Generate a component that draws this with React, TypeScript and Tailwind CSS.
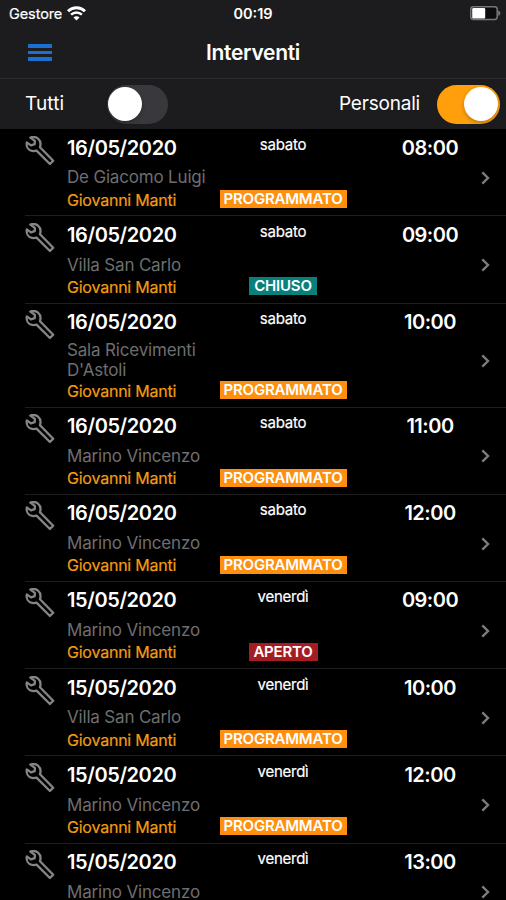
import { clsx } from 'clsx';

type Status = 'PROGRAMMATO' | 'CHIUSO' | 'APERTO';

interface Job {
  id: number;
  date: string;
  day: string;
  time: string;
  customer: string;
  technician: string;
  status: Status;
}

const jobs: Job[] = [
  { id: 1, date: '16/05/2020', day: 'sabato', time: '08:00', customer: 'De Giacomo Luigi', technician: 'Giovanni Manti', status: 'PROGRAMMATO' },
  { id: 2, date: '16/05/2020', day: 'sabato', time: '09:00', customer: 'Villa San Carlo', technician: 'Giovanni Manti', status: 'CHIUSO' },
  { id: 3, date: '16/05/2020', day: 'sabato', time: '10:00', customer: "Sala Ricevimenti D'Astoli", technician: 'Giovanni Manti', status: 'PROGRAMMATO' },
  { id: 4, date: '16/05/2020', day: 'sabato', time: '11:00', customer: 'Marino Vincenzo', technician: 'Giovanni Manti', status: 'PROGRAMMATO' },
  { id: 5, date: '16/05/2020', day: 'sabato', time: '12:00', customer: 'Marino Vincenzo', technician: 'Giovanni Manti', status: 'PROGRAMMATO' },
  { id: 6, date: '15/05/2020', day: 'venerdì', time: '09:00', customer: 'Marino Vincenzo', technician: 'Giovanni Manti', status: 'APERTO' },
  { id: 7, date: '15/05/2020', day: 'venerdì', time: '10:00', customer: 'Villa San Carlo', technician: 'Giovanni Manti', status: 'PROGRAMMATO' },
  { id: 8, date: '15/05/2020', day: 'venerdì', time: '12:00', customer: 'Marino Vincenzo', technician: 'Giovanni Manti', status: 'PROGRAMMATO' },
  { id: 9, date: '15/05/2020', day: 'venerdì', time: '13:00', customer: 'Marino Vincenzo', technician: 'Giovanni Manti', status: 'PROGRAMMATO' },
];

const statusStyles: Record<Status, string> = {
  PROGRAMMATO: 'bg-[#ff8f0e] w-[127px]',
  CHIUSO: 'bg-[#08807c] w-[68px]',
  APERTO: 'bg-[#a51d22] w-[69px]',
};

function WifiIcon() {
  return (
    <svg className="w-[19px] h-[15px]" viewBox="0 0 19 15" fill="none" stroke="#fff">
      <path d="M1 5.2C5.8.6 13.2.6 18 5.2" strokeWidth="2.9" />
      <path d="M4.1 8.7c3.1-2.9 7.7-2.9 10.8 0" strokeWidth="2.5" />
      <path d="M9.5 14.6 6.5 11.4c1.7-1.5 4.3-1.5 6 0Z" fill="#fff" stroke="none" />
    </svg>
  );
}

function BatteryIcon() {
  return (
    <svg className="w-[31px] h-[15px]" viewBox="0 0 31 15">
      <rect x="0.8" y="0.8" width="26.4" height="12.6" rx="2.6" fill="#0c0c0d" stroke="#77777a" strokeWidth="1.5" />
      <rect x="2.2" y="2" width="13" height="10.4" rx="1.2" fill="#fff" />
      <path d="M28.2 4.4c2.8.9 2.8 4.5 0 5.4Z" fill="#77777a" />
    </svg>
  );
}

function WrenchIcon() {
  return (
    <svg
      className="w-[30px] h-[30px]"
      viewBox="0 0 30 30"
      fill="none"
      stroke="#858585"
      strokeWidth="2.3"
      strokeLinejoin="round"
    >
      <path d="M5.3 1.6 9.9 4.9 9.7 8.2 6 9.4 1.8 6.4C1.1 10.6 3.2 14.2 7 14.9c1.7.3 3.2.1 4.5-.3L24.9 28 28.2 24.7 15 11.2c1-3.3.3-6.7-2-8.6C10.7.8 8 .6 5.3 1.6Z" />
    </svg>
  );
}

function Toggle({ on }: { on: boolean }) {
  return (
    <div
      className={clsx(
        'flex items-center rounded-full h-[39px] p-[2.5px]',
        on ? 'w-[63px] bg-[#ff9f0c] justify-end' : 'w-[61px] pl-[0.5px] bg-[#39393d]'
      )}
    >
      <div className="size-[34px] rounded-full bg-white shadow-[0_2px_4px_rgba(0,0,0,0.25)]" />
    </div>
  );
}

function JobRow({ job }: { job: Job }) {
  return (
    <div className="ml-[25px] flex border-b border-[#1e1e1f]">
      <div className="w-[42px] shrink-0 pt-[6.5px]">
        <WrenchIcon />
      </div>

      <div className="w-[150px] shrink-0 pt-[6.5px] pb-[5.7px]">
        <div className="h-[25px] leading-[25px] text-[20px] tracking-[-0.4px] font-semibold text-white whitespace-nowrap">
          {job.date}
        </div>
        <div className="mt-[5px] min-h-[24px] flex items-center text-[17px] leading-[20.4px] tracking-[-0.18px] text-[#6e6e70]">
          {job.customer}
        </div>
        <div className="h-5 leading-5 text-[16px] tracking-[-0.22px] text-[#f39c12] [-webkit-text-stroke:0.2px_#f39c12] whitespace-nowrap">
          {job.technician}
        </div>
      </div>

      <div className="w-[132px] shrink-0 flex flex-col items-center justify-between pt-[5.5px] pb-[7.2px]">
        <span className="text-[15px] leading-[19px] tracking-[-0.25px] text-white [-webkit-text-stroke:0.2px_#fff]">
          {job.day}
        </span>
        <span
          className={clsx(
            'h-[18px] leading-[18px] text-center text-[15px] tracking-[-0.2px] font-semibold text-white',
            statusStyles[job.status]
          )}
        >
          {job.status}
        </span>
      </div>

      <div className="w-[162px] shrink-0 pt-[6.5px] text-center leading-[25px] text-[20px] tracking-[-0.5px] font-semibold text-white">
        {job.time}
      </div>

      {/* chevron sits a little under the row's middle */}
      <div className="-ml-[30px] flex items-center pt-[11.5px]">
        <svg className="w-[9px] h-[14px]" viewBox="0 0 9 14" fill="none" stroke="#7c7c80" strokeWidth="2.4">
          <path d="M1.3 1.4 7 7l-5.7 5.6" />
        </svg>
      </div>
    </div>
  );
}

export default function App() {
  return (
    <div className="w-[506px] h-[900px] overflow-hidden bg-black text-white font-['Inter',sans-serif]">
      <header className="bg-[#1c1c1e]">
        <div className="grid grid-cols-3 items-center h-[27px] pl-[7px] pr-[7px] text-[14.5px]">
          <div className="flex items-center gap-[5px] pl-[2px]">
            <span className="tracking-[-0.1px] [-webkit-text-stroke:0.2px_#fff]">Gestore</span>
            <WifiIcon />
          </div>
          <span className="text-center font-semibold">00:19</span>
          <div className="flex justify-end -mr-[2px]">
            <BatteryIcon />
          </div>
        </div>

        <div className="grid grid-cols-3 items-center h-[52px] pl-[28px] pr-[28px] border-b border-[#2d2d2f]">
          <div className="flex flex-col gap-[3px] w-[24px]">
            <div className="h-[4px] bg-[#1a6fd0]" />
            <div className="h-[3px] bg-[#1a6fd0]" />
            <div className="h-[4px] bg-[#1a6fd0]" />
          </div>
          <h1 className="text-center text-[21px] tracking-[-0.3px] font-semibold">Interventi</h1>
        </div>

        <div className="flex items-center h-[50.2px] pl-[25px] pr-[6px] text-[19px]">
          <span className="w-[82px] tracking-[0.1px]">Tutti</span>
          <Toggle on={false} />
          <span className="ml-auto mr-[17px] tracking-[-0.2px]">Personali</span>
          <Toggle on />
        </div>
      </header>

      <main>
        {jobs.map((job) => (
          <JobRow key={job.id} job={job} />
        ))}
      </main>
    </div>
  );
}
